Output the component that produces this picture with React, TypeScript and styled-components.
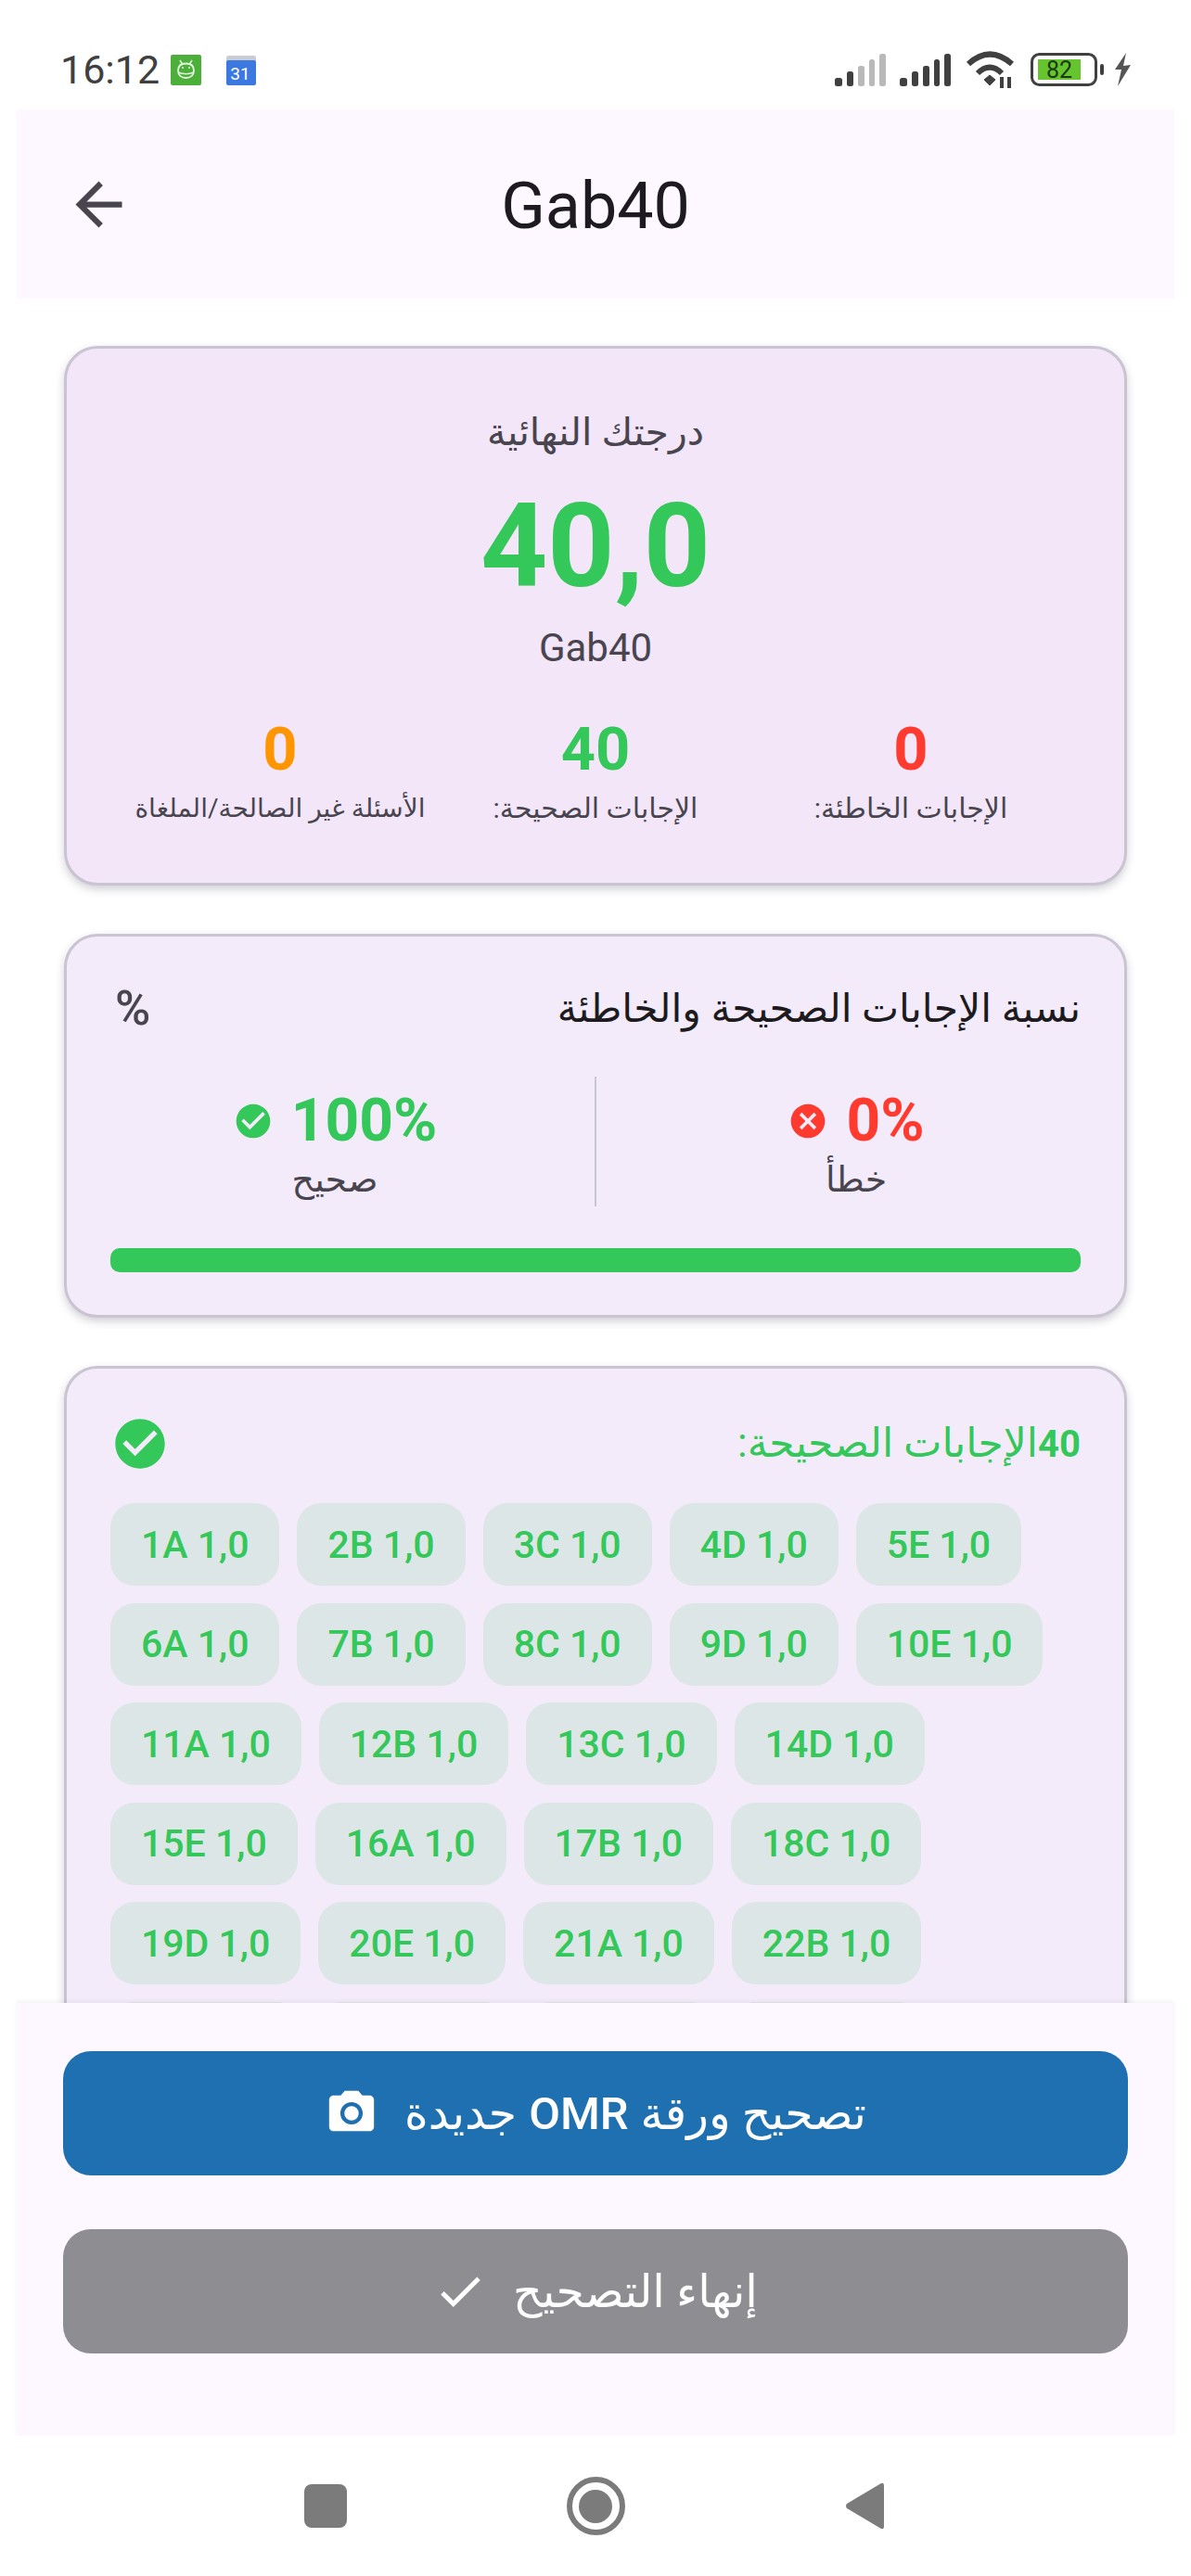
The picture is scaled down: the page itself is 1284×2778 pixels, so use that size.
import styled, { createGlobalStyle } from 'styled-components';

const GlobalStyle = createGlobalStyle`
  html, body {
    margin: 0;
    padding: 0;
    background: #fff;
  }
  * {
    box-sizing: border-box;
  }
`;

const FONT = `Roboto, "DejaVu Sans", sans-serif`;
const GREEN = '#34c759';
const RED = '#ff3b30';
const ORANGE = '#ff9500';
const MUTED = '#49454f';

const Screen = styled.div`
  width: 1284px;
  height: 2778px;
  display: flex;
  flex-direction: column;
  overflow: hidden;
  background: #fff;
  font-family: ${FONT};
`;

const StatusBar = styled.div`
  height: 118px;
  flex: none;
  display: flex;
  align-items: flex-start;
  justify-content: space-between;
  padding: 55px 64px 0 65px;
`;

const StatusSide = styled.div`
  display: flex;
  align-items: center;
  height: 40px;
`;

const Time = styled.span`
  font-size: 43px;
  line-height: 40px;
  font-weight: 400;
  color: #404040;
  margin-right: 12px;
`;

const StatusIconGap = styled.span<{ $w: number }>`
  display: inline-block;
  width: ${(p) => p.$w}px;
`;

const AppBar = styled.header`
  flex: none;
  height: 204px;
  margin: 0 18px;
  background: #fdf7ff;
  display: flex;
  align-items: center;
  position: relative;
  padding-left: 51px;
`;

const BackIcon = styled.svg`
  width: 75px;
  height: 75px;
  fill: ${MUTED};
`;

const Title = styled.h1`
  position: absolute;
  left: 0;
  right: 0;
  top: 64px;
  margin: 0;
  text-align: center;
  font-size: 70px;
  line-height: 80px;
  font-weight: 400;
  color: #1d1b20;
`;

const Content = styled.main`
  flex: 1;
  min-height: 0;
  overflow: hidden;
  padding: 51px 69px 0;
  display: flex;
  flex-direction: column;
  gap: 52px;
`;

const Card = styled.section<{ $tint?: string }>`
  flex: none;
  width: 1146px;
  background: ${(p) => p.$tint || '#f3ebfa'};
  border: 3px solid #c9c3d2;
  border-radius: 36px;
  box-shadow: 0 4px 10px rgba(60, 50, 80, 0.24);
`;

const ScoreCard = styled(Card)`
  height: 582px;
  display: flex;
  flex-direction: column;
  align-items: center;
  padding: 55px 60px 0;
`;

const ScoreLabel = styled.div`
  font-size: 41px;
  line-height: 70px;
  color: ${MUTED};
`;

const ScoreValue = styled.div`
  font-size: 126px;
  line-height: 150px;
  margin-top: 13px;
  font-weight: 700;
  color: ${GREEN};
`;

const ScoreName = styled.div`
  font-size: 42px;
  line-height: 50px;
  margin-top: 10px;
  color: ${MUTED};
`;

const StatRow = styled.div`
  direction: rtl;
  width: 100%;
  display: grid;
  grid-template-columns: repeat(3, 1fr);
  margin-top: 46px;
`;

const Stat = styled.div`
  display: flex;
  flex-direction: column;
  align-items: center;
`;

const StatNumber = styled.div<{ $color: string }>`
  font-size: 65px;
  line-height: 76px;
  font-weight: 700;
  color: ${(p) => p.$color};
`;

const StatLabel = styled.div<{ $size?: number }>`
  font-size: ${(p) => p.$size || 30}px;
  line-height: 44px;
  margin-top: 4px;
  color: ${MUTED};
  white-space: nowrap;
`;

const RatioCard = styled(Card)`
  height: 414px;
  padding: 48px 47px 0;
`;

const CardHead = styled.div`
  direction: rtl;
  display: flex;
  align-items: center;
  justify-content: space-between;
`;

const RatioTitle = styled.h2`
  margin: 0;
  font-size: 42.5px;
  line-height: 60px;
  font-weight: 400;
  color: #1d1b20;
`;

const Percent = styled.span`
  font-size: 52px;
  line-height: 60px;
  font-weight: 500;
  color: ${MUTED};
  margin-left: 5px;
`;

const RatioRow = styled.div`
  direction: rtl;
  display: flex;
  height: 140px;
  margin: 43px -38px 0;
`;

const RatioSide = styled.div`
  flex: 1;
  display: flex;
  flex-direction: column;
  align-items: center;
`;

const Divider = styled.div`
  width: 2px;
  flex: none;
  background: #c9c5cd;
`;

const RatioValue = styled.div<{ $color: string }>`
  direction: ltr;
  display: flex;
  align-items: center;
  gap: 19px;
  margin-top: 16px;
  font-size: 64px;
  line-height: 64px;
  font-weight: 700;
  color: ${(p) => p.$color};
`;

const RatioLabel = styled.div`
  font-size: 38px;
  line-height: 50px;
  margin-top: 6px;
  color: ${MUTED};
`;

const Glyph = styled.svg<{ $size: number; $color: string }>`
  width: ${(p) => p.$size}px;
  height: ${(p) => p.$size}px;
  fill: ${(p) => p.$color};
  flex: none;
`;

const Progress = styled.div`
  height: 26px;
  margin-top: 45px;
  border-radius: 10px;
  background: ${GREEN};
`;

const AnswersCard = styled(Card)`
  padding: 48px 47px 40px;
`;

const AnswersTitle = styled.h2`
  margin: 0;
  font-size: 44px;
  line-height: 64px;
  font-weight: 400;
  color: ${GREEN};
`;

const AnswersCount = styled.b`
  font-size: 40px;
  font-weight: 700;
`;

const ChipWrap = styled.div`
  display: flex;
  flex-wrap: wrap;
  gap: 18.5px 19px;
  margin-top: 31px;
`;

const Chip = styled.span`
  height: 89px;
  padding: 0 33px;
  display: flex;
  align-items: center;
  border-radius: 26px;
  background: #dde6e6;
  color: ${GREEN};
  font-size: 41px;
  font-weight: 500;
  white-space: nowrap;
`;

const BottomPanel = styled.footer`
  flex: none;
  height: 467px;
  margin: 0 18px;
  padding: 52px 50px 0;
  background: #fdf7ff;
  box-shadow: 0 -2px 4px rgba(0, 0, 0, 0.05);
  display: flex;
  flex-direction: column;
  gap: 58px;
  position: relative;
`;

const ActionButton = styled.button<{ $bg: string }>`
  direction: rtl;
  height: 134px;
  width: 100%;
  border: 0;
  border-radius: 30px;
  background: ${(p) => p.$bg};
  color: #fff;
  display: flex;
  align-items: center;
  justify-content: center;
  gap: 28px;
  font-family: ${FONT};
  font-size: 49px;
  font-weight: 400;
  padding: 0;
`;

const ButtonLabel = styled.span`
  display: flex;
  align-items: center;
  gap: 13px;
`;

const OmrWord = styled.b`
  font-weight: 500;
`;

const NavBar = styled.nav`
  flex: none;
  height: 151px;
  display: flex;
  align-items: center;
  justify-content: center;
  gap: 237px;
  padding-right: 4px;
`;

const NavSquare = styled.span`
  width: 46px;
  height: 47px;
  border-radius: 8px;
  background: #7b7b7b;
`;

const NavCircle = styled.span`
  width: 63px;
  height: 63px;
  border-radius: 50%;
  border: 6px solid #7b7b7b;
  display: flex;
  align-items: center;
  justify-content: center;
  &::after {
    content: '';
    width: 36px;
    height: 36px;
    border-radius: 50%;
    background: #7b7b7b;
  }
`;

const CHECK_CIRCLE =
  'M12 2C6.48 2 2 6.48 2 12s4.48 10 10 10 10-4.48 10-10S17.52 2 12 2zm-2 15l-5-5 1.41-1.41L10 14.17l7.59-7.59L19 8l-9 9z';
const CANCEL =
  'M12 2C6.47 2 2 6.47 2 12s4.47 10 10 10 10-4.47 10-10S17.53 2 12 2zm5 13.59L15.59 17 12 13.41 8.41 17 7 15.59 10.59 12 7 8.41 8.41 7 12 10.59 15.59 7 17 8.41 13.41 12 17 15.59z';
const CAMERA =
  'M9 2L7.17 4H4c-1.1 0-2 .9-2 2v12c0 1.1.9 2 2 2h16c1.1 0 2-.9 2-2V6c0-1.1-.9-2-2-2h-3.17L15 2H9zm3 15c-2.76 0-5-2.24-5-5s2.24-5 5-5 5 2.24 5 5-2.24 5-5 5z';

const Icon = ({ d, size, color, children }: { d: string; size: number; color: string; children?: React.ReactNode }) => (
  <Glyph viewBox="0 0 24 24" $size={size} $color={color}>
    <path d={d} />
    {children}
  </Glyph>
);

const Signal = ({ weak }: { weak?: boolean }) => {
  const bars = [
    { x: 0, w: 8, h: 9 },
    { x: 13, w: 7, h: 16 },
    { x: 25, w: 7, h: 22 },
    { x: 37, w: 6, h: 29 },
    { x: 48, w: 7, h: 35 },
  ];
  return (
    <svg width="55" height="35" viewBox="0 0 55 35">
      {bars.map((b, i) => (
        <rect
          key={b.x}
          x={b.x}
          y={35 - b.h}
          width={b.w}
          height={b.h}
          rx="2.5"
          fill={weak && i > 1 ? '#b9b9b9' : '#404040'}
        />
      ))}
    </svg>
  );
};

const Wifi = () => (
  <svg width="54" height="40" viewBox="0 0 54 40" fill="none" stroke="#404040" strokeWidth="6">
    <path d="M3 14 Q26 -7 50 14" />
    <path d="M13 24 Q26 11 39 24" />
    <path d="M20 31 L26 26 L32 31 L26 37 Z" fill="#404040" strokeWidth="1" />
    <path d="M39 28v12M47 28v12" strokeWidth="4" />
  </svg>
);

const Battery = () => (
  <svg width="80" height="36" viewBox="0 0 80 36">
    <rect x="1.5" y="1.5" width="69" height="33" rx="8" fill="none" stroke="#404040" strokeWidth="3" />
    <rect x="8" y="7" width="46" height="22" fill="#66c42f" />
    <rect x="75" y="12" width="4" height="12" rx="2" fill="#404040" />
    <text x="31" y="27" textAnchor="middle" fontFamily="Roboto, sans-serif" fontSize="25" fill="#1c3a10">
      82
    </text>
  </svg>
);

const Bolt = () => (
  <svg width="20" height="36" viewBox="0 0 20 36">
    <path d="M14 0 L2 18 L9 18 L5 36 L19 13 L11 14 Z" fill="#555" />
  </svg>
);

// small android head on a green tile, from the notification area
const AppBadge = () => (
  <svg width="33" height="33" viewBox="0 0 33 33">
    <rect width="33" height="33" rx="2" fill="#4caf3a" />
    <path d="M10 6l2.500 4M23 6l-2.500 4" stroke="#e4f4dc" strokeWidth="1.6" />
    <path d="M8 17c0-5 3.500-7.500 8.500-7.500S25 12 25 17c0 5-3.500 8-8.500 8S8 22 8 17z" fill="none" stroke="#e4f4dc" strokeWidth="1.8" />
    <path d="M8 19c5 2 12 2 17 0" fill="none" stroke="#e4f4dc" strokeWidth="1.6" />
    <circle cx="13" cy="14" r="1" fill="#e4f4dc" />
    <circle cx="20" cy="14" r="1" fill="#e4f4dc" />
  </svg>
);

const CalendarBadge = () => (
  <svg width="32" height="33" viewBox="0 0 32 33">
    <rect y="1" width="32" height="8" rx="2" fill="#c9ccd2" />
    <rect y="6" width="32" height="27" rx="2" fill="#3b78e0" />
    <text x="15" y="27" textAnchor="middle" fontFamily="Roboto, sans-serif" fontSize="19" fill="#fff">
      31
    </text>
  </svg>
);

// only the rows that reach the visible part of the list, the rest sit below the footer
const answers = Array.from({ length: 26 }, (_, i) => `${i + 1}${'ABCDE'[i % 5]} 1,0`);

const App = () => {
  return (
    <Screen>
      <GlobalStyle />
      <StatusBar>
        <StatusSide>
          <Time>16:12</Time>
          <AppBadge />
          <StatusIconGap $w={27} />
          <CalendarBadge />
        </StatusSide>
        <StatusSide>
          <Signal weak />
          <StatusIconGap $w={15} />
          <Signal />
          <StatusIconGap $w={16} />
          <Wifi />
          <StatusIconGap $w={16} />
          <Battery />
          <StatusIconGap $w={9} />
          <Bolt />
        </StatusSide>
      </StatusBar>

      <AppBar>
        <BackIcon viewBox="0 0 24 24">
          <path d="M20 11H7.83l5.59-5.59L12 4l-8 8 8 8 1.41-1.41L7.83 13H20v-2z" />
        </BackIcon>
        <Title>Gab40</Title>
      </AppBar>

      <Content>
        <ScoreCard $tint="#f2e6f8">
          <ScoreLabel>درجتك النهائية</ScoreLabel>
          <ScoreValue>40,0</ScoreValue>
          <ScoreName>Gab40</ScoreName>
          <StatRow>
            <Stat>
              <StatNumber $color={RED}>0</StatNumber>
              <StatLabel>الإجابات الخاطئة:</StatLabel>
            </Stat>
            <Stat>
              <StatNumber $color={GREEN}>40</StatNumber>
              <StatLabel>الإجابات الصحيحة:</StatLabel>
            </Stat>
            <Stat>
              <StatNumber $color={ORANGE}>0</StatNumber>
              <StatLabel $size={28}>الأسئلة غير الصالحة/الملغاة</StatLabel>
            </Stat>
          </StatRow>
        </ScoreCard>

        <RatioCard>
          <CardHead>
            <RatioTitle>نسبة الإجابات الصحيحة والخاطئة</RatioTitle>
            <Percent>%</Percent>
          </CardHead>
          <RatioRow>
            <RatioSide>
              <RatioValue $color={RED}>
                <Icon d={CANCEL} size={44} color={RED} />
                0%
              </RatioValue>
              <RatioLabel>خطأ</RatioLabel>
            </RatioSide>
            <Divider />
            <RatioSide>
              <RatioValue $color={GREEN}>
                <Icon d={CHECK_CIRCLE} size={44} color={GREEN} />
                100%
              </RatioValue>
              <RatioLabel>صحيح</RatioLabel>
            </RatioSide>
          </RatioRow>
          <Progress />
        </RatioCard>

        <AnswersCard>
          <CardHead>
            <AnswersTitle>
              <AnswersCount>40</AnswersCount>الإجابات الصحيحة:
            </AnswersTitle>
            <Icon d={CHECK_CIRCLE} size={64} color={GREEN} />
          </CardHead>
          <ChipWrap>
            {answers.map((a) => (
              <Chip key={a}>{a}</Chip>
            ))}
          </ChipWrap>
        </AnswersCard>
      </Content>

      <BottomPanel>
        <ActionButton $bg="#1f70b0">
          <ButtonLabel>
            <span>تصحيح ورقة</span>
            <OmrWord>OMR</OmrWord>
            <span>جديدة</span>
          </ButtonLabel>
          <Icon d={CAMERA} size={58} color="#fff">
            <circle cx="12" cy="12" r="3.2" />
          </Icon>
        </ActionButton>
        <ActionButton $bg="#8e8d92">
          <span>إنهاء التصحيح</span>
          <Icon d="M9 16.17L4.83 12l-1.42 1.41L9 19 21 7l-1.41-1.41z" size={58} color="#fff" />
        </ActionButton>
      </BottomPanel>

      <NavBar>
        <NavSquare />
        <NavCircle />
        <svg width="42" height="53" viewBox="0 0 42 53">
          <path d="M39 2 Q42 1 42 5 V48 Q42 52 39 51 L2 29 Q0 26.500 2 24 Z" fill="#7b7b7b" />
        </svg>
      </NavBar>
    </Screen>
  );
};

export default App;
